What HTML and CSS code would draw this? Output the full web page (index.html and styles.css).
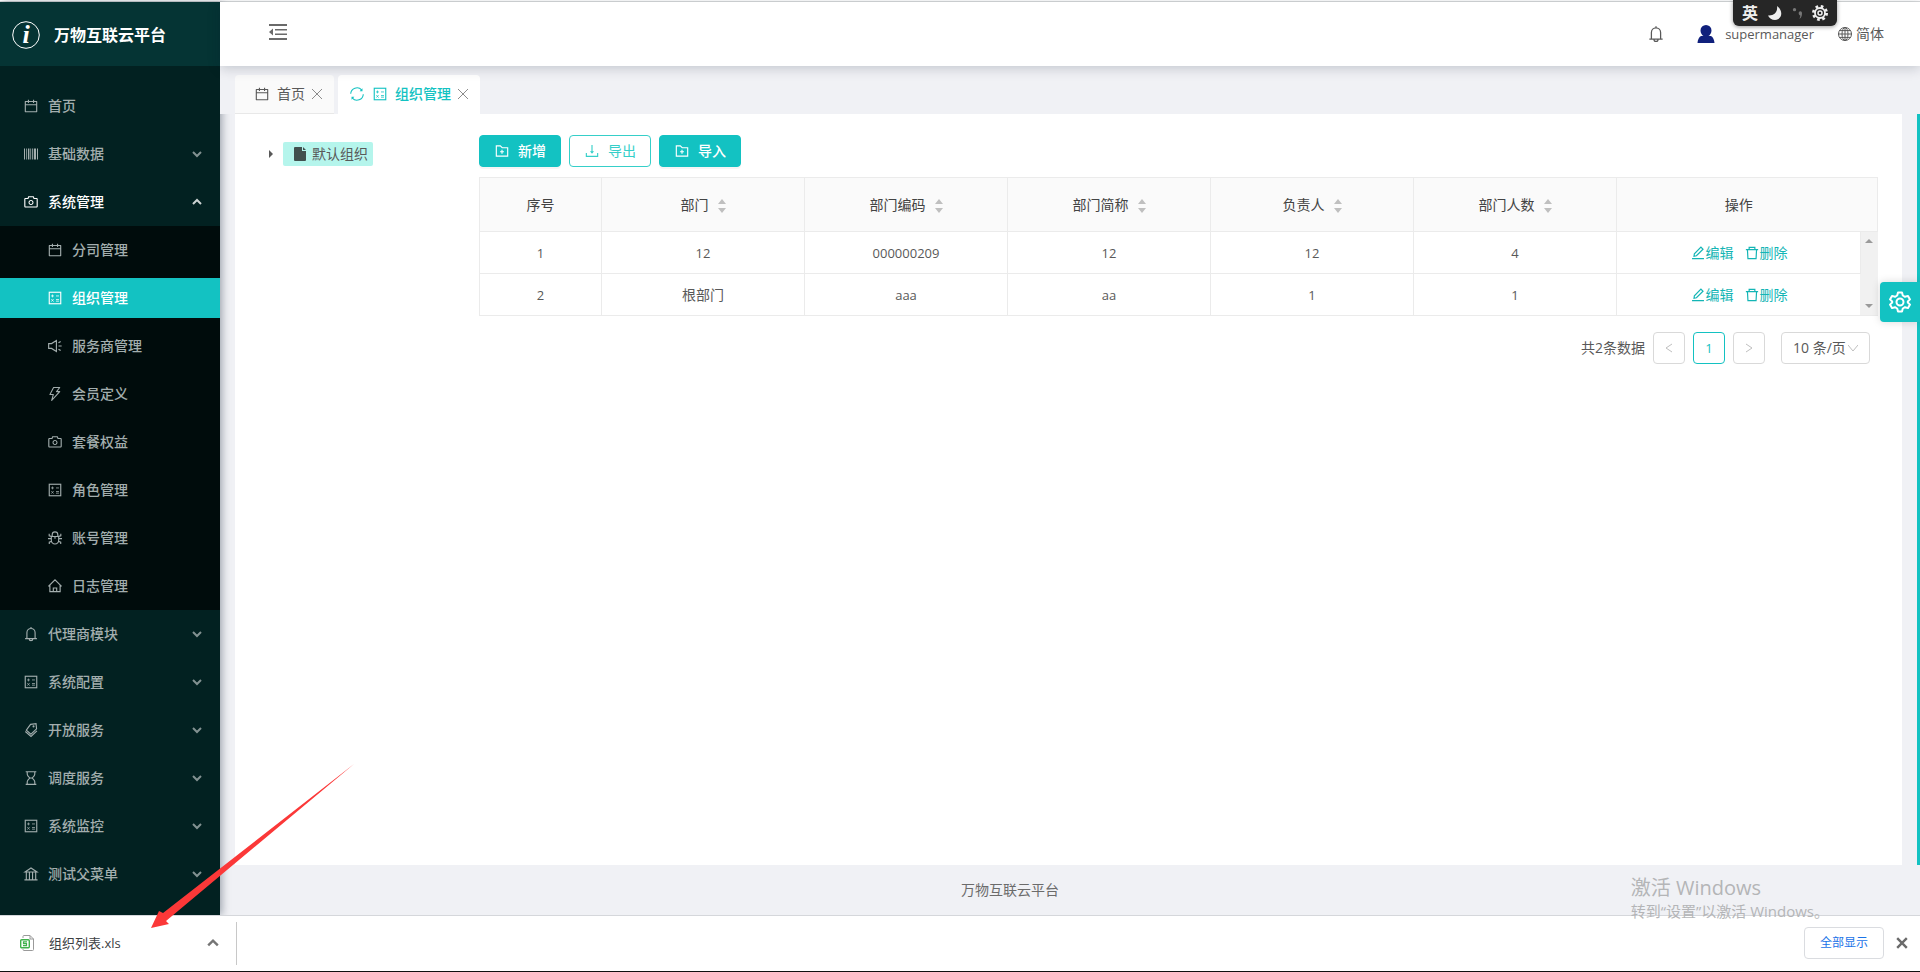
FILE: index.html
```html
<!DOCTYPE html>
<html lang="zh-CN">
<head>
<meta charset="utf-8">
<title>万物互联云平台</title>
<link rel="stylesheet" href="styles.css">
</head>
<body>
<svg class="sprite" aria-hidden="true">
  <symbol id="calendar" viewBox="0 0 1024 1024"><path d="M880 184H712v-64c0-4.400-3.600-8-8-8h-56c-4.400 0-8 3.600-8 8v64H384v-64c0-4.400-3.600-8-8-8h-56c-4.400 0-8 3.600-8 8v64H144c-17.700 0-32 14.300-32 32v664c0 17.700 14.300 32 32 32h736c17.700 0 32-14.300 32-32V216c0-17.700-14.300-32-32-32zm-40 656H184V460h656v380zM184 392V256h128v48c0 4.400 3.600 8 8 8h56c4.400 0 8-3.600 8-8v-48h256v48c0 4.400 3.600 8 8 8h56c4.400 0 8-3.600 8-8v-48h128v136H184z"/></symbol>
  <symbol id="camera" viewBox="0 0 1024 1024"><path d="M864 248H728l-32.400-90.800a32.070 32.070 0 0 0-30.200-21.200H358.600c-13.500 0-25.600 8.500-30.100 21.200L296 248H160c-44.200 0-80 35.800-80 80v456c0 44.200 35.800 80 80 80h704c44.200 0 80-35.800 80-80V328c0-44.200-35.800-80-80-80zm8 536c0 4.400-3.600 8-8 8H160c-4.400 0-8-3.600-8-8V328c0-4.400 3.600-8 8-8h186.700l17.100-47.800 22.900-64.200h250.500l22.900 64.200 17.100 47.800H864c4.400 0 8 3.600 8 8v456zM512 384c-88.400 0-160 71.600-160 160s71.600 160 160 160 160-71.600 160-160-71.600-160-160-160zm0 256c-53 0-96-43-96-96s43-96 96-96 96 43 96 96-43 96-96 96z"/></symbol>
  <symbol id="barcode" viewBox="0 0 1024 1024"><path d="M64 160h64v704H64zM208 160h52v704h-52zM320 160h88v704h-88zM468 160h52v704h-52zM580 160h52v704h-52zM692 160h140v704H692zM896 160h64v704h-64z"/></symbol>
  <symbol id="calculator" viewBox="0 0 1024 1024"><g fill="none" stroke="currentColor" stroke-width="72"><rect x="144" y="144" width="736" height="736"/><g stroke-width="50"><path d="M260 380h180M350 290v180M576 380h190M576 610h190M576 714h190M280 584l140 156M420 584L280 740"/></g></g></symbol>
  <symbol id="sound" viewBox="0 0 1024 1024"><g fill="none" stroke="currentColor" stroke-width="72"><path d="M106 358h184l312-198v704L290 666H106zM736 512h202M734 310l140-86M734 714l140 86"/></g></symbol>
  <symbol id="bolt" viewBox="0 0 1024 1024"><path fill="none" stroke="currentColor" stroke-width="68" stroke-linejoin="round" d="M420 98h396L610 360h204L300 918l106-378H188z"/></symbol>
  <symbol id="bug" viewBox="0 0 1024 1024"><g fill="none" stroke="currentColor" stroke-width="72"><path d="M276 412h472v248a236 236 0 0 1-472 0zM332 404V300a180 180 0 0 1 360 0v104M512 430v130M64 550h206M754 550h206M276 410l-136-40V240M748 410l136-40V240M294 720l-148 60v112M730 720l148 60v112"/></g></symbol>
  <symbol id="home" viewBox="0 0 1024 1024"><path fill="none" stroke="currentColor" stroke-width="74" d="M90 536l422-420 422 420M184 450v420h656V450M404 870V640h216v230"/></symbol>
  <symbol id="bell" viewBox="0 0 1024 1024"><path fill="none" stroke="currentColor" stroke-width="72" d="M250 770V424a262 262 0 0 1 524 0v346M134 806h756M512 64v96M396 824c0 146 232 146 232 0"/></symbol>
  <symbol id="tags" viewBox="0 0 1024 1024"><g fill="none" stroke="currentColor" stroke-width="72"><path d="M484 150l350-44 34 328-360 346-296-260z"/><path d="M150 610l362 310 380-350"/><circle cx="674" cy="280" r="30"/></g></symbol>
  <symbol id="hourglass" viewBox="0 0 1024 1024"><path fill="none" stroke="currentColor" stroke-width="72" d="M172 108h680M172 916h680M270 116v150c0 110 110 190 170 246-60 56-170 136-170 246v150M754 116v150c0 110-110 190-170 246 60 56 170 136 170 246v150M420 512h184"/></symbol>
  <symbol id="bank" viewBox="0 0 1024 1024"><path fill="none" stroke="currentColor" stroke-width="72" d="M130 380L512 130l382 250zM212 400v450M412 400v450M612 400v450M812 400v450M92 886h840"/></symbol>
  <symbol id="down" viewBox="0 0 10 10"><path fill="none" stroke="currentColor" stroke-width="2" d="M1 3l4 4 4-4"/></symbol>
  <symbol id="up" viewBox="0 0 10 10"><path fill="none" stroke="currentColor" stroke-width="2" d="M1 7l4-4 4 4"/></symbol>
  <symbol id="close" viewBox="0 0 10 10"><path fill="none" stroke="currentColor" d="M0 0l10 10M10 0L0 10"/></symbol>
  <symbol id="cross" viewBox="0 0 10 10"><path fill="none" stroke="currentColor" stroke-width="2" d="M1 1l8 8M9 1l-8 8"/></symbol>
  <symbol id="reload" viewBox="0 0 1024 1024"><path fill="none" stroke="currentColor" stroke-width="70" d="M110 500a402 402 0 0 1 700-250M914 524a402 402 0 0 1-700 250"/><path d="M862 140v190H680zM162 884V694h182z"/></symbol>
  <symbol id="folder" viewBox="0 0 1024 1024"><path fill="none" stroke="currentColor" stroke-width="72" d="M148 184h256l120 120h352v536H148zM512 434v250M388 560h248"/></symbol>
  <symbol id="download" viewBox="0 0 1024 1024"><path fill="none" stroke="currentColor" stroke-width="72" d="M512 130v470M150 640v216h724V640"/><path d="M380 520h264L512 690z"/></symbol>
  <symbol id="edit" viewBox="0 0 1024 1024"><path fill="none" stroke="currentColor" stroke-width="76" d="M130 872h764M256 724l24-166 420-420 132 132-420 420z"/></symbol>
  <symbol id="trash" viewBox="0 0 1024 1024"><path fill="none" stroke="currentColor" stroke-width="76" d="M120 292h784M330 292V148h364v144M220 292l32 584h520l32-584"/></symbol>
  <symbol id="sorter" viewBox="0 0 8 14"><path d="M4 0l4 5H0zM4 14l4-5H0z"/></symbol>
  <symbol id="gear" viewBox="0 0 24 24"><g fill="none" stroke="currentColor" stroke-width="2" stroke-linejoin="round"><path d="M10 2.500h4l.8 3 2.200 1.300 3-.9 2 3.500-2.200 2.100v1l2.200 2.100-2 3.500-3-.9-2.200 1.300-.8 3h-4l-.8-3L7 17.200l-3 .9-2-3.500 2.200-2.100v-1L2 9.400l2-3.500 3 .9 2.200-1.300z"/><circle cx="12" cy="12" r="3.500"/></g></symbol>
  <symbol id="globe" viewBox="0 0 14 14"><g fill="none" stroke="currentColor"><circle cx="7" cy="7" r="6.500"/><ellipse cx="7" cy="7" rx="3" ry="6.500"/><path d="M7 0v14M0 7h14M1.500 3.600h11M1.500 10.400h11"/></g></symbol>
</svg>

<div class="app">
  <aside class="sider">
    <div class="brand">
      <svg class="brand-mark" viewBox="0 0 28 28" aria-hidden="true"><circle cx="14" cy="14" r="13.300"/><text x="14" y="22">i</text></svg>
      <h1 class="brand-name">万物互联云平台</h1>
    </div>
    <nav class="menu">
      <a class="item" href="#"><svg class="icon"><use href="#calendar"/></svg>首页</a>
      <button class="item" type="button"><svg class="icon"><use href="#barcode"/></svg>基础数据<svg class="arrow"><use href="#down"/></svg></button>
      <button class="item open" type="button"><svg class="icon"><use href="#camera"/></svg>系统管理<svg class="arrow"><use href="#up"/></svg></button>
      <div class="submenu">
        <a class="item" href="#"><svg class="icon"><use href="#calendar"/></svg>分司管理</a>
        <a class="item active" href="#"><svg class="icon"><use href="#calculator"/></svg>组织管理</a>
        <a class="item" href="#"><svg class="icon"><use href="#sound"/></svg>服务商管理</a>
        <a class="item" href="#"><svg class="icon"><use href="#bolt"/></svg>会员定义</a>
        <a class="item" href="#"><svg class="icon"><use href="#camera"/></svg>套餐权益</a>
        <a class="item" href="#"><svg class="icon"><use href="#calculator"/></svg>角色管理</a>
        <a class="item" href="#"><svg class="icon"><use href="#bug"/></svg>账号管理</a>
        <a class="item" href="#"><svg class="icon"><use href="#home"/></svg>日志管理</a>
      </div>
      <button class="item" type="button"><svg class="icon"><use href="#bell"/></svg>代理商模块<svg class="arrow"><use href="#down"/></svg></button>
      <button class="item" type="button"><svg class="icon"><use href="#calculator"/></svg>系统配置<svg class="arrow"><use href="#down"/></svg></button>
      <button class="item" type="button"><svg class="icon"><use href="#tags"/></svg>开放服务<svg class="arrow"><use href="#down"/></svg></button>
      <button class="item" type="button"><svg class="icon"><use href="#hourglass"/></svg>调度服务<svg class="arrow"><use href="#down"/></svg></button>
      <button class="item" type="button"><svg class="icon"><use href="#calculator"/></svg>系统监控<svg class="arrow"><use href="#down"/></svg></button>
      <button class="item" type="button"><svg class="icon"><use href="#bank"/></svg>测试父菜单<svg class="arrow"><use href="#down"/></svg></button>
    </nav>
  </aside>

  <div class="main">
    <header class="header">
      <button class="fold" type="button" aria-label="收起菜单"><svg viewBox="0 0 18 16"><path d="M0 0h18v2H0zM6 5h12v1.500H6zM6 9.500h12V11H6zM0 14h18v2H0zM0 8l4-3.500v7z"/></svg></button>
      <div class="tools">
        <button class="bell" type="button" aria-label="通知"><svg><use href="#bell"/></svg></button>
        <a class="user" href="#"><svg viewBox="0 0 18 18" aria-hidden="true"><path d="M9 0a5.500 5.500 0 0 1 5.500 5.500c0 2.400-1.400 4.700-3 5.500h2.500c2 1 3.300 4 3.500 7H.5C.7 15 2 12 4 11h2.500c-1.600-.8-3-3.100-3-5.500A5.500 5.500 0 0 1 9 0z"/></svg>supermanager</a>
        <a class="lang" href="#"><svg class="globe"><use href="#globe"/></svg>简体</a>
      </div>
    </header>
    <div class="tabs">
      <div class="tab"><svg class="icon"><use href="#calendar"/></svg><a href="#">首页</a><button type="button" aria-label="关闭"><svg><use href="#close"/></svg></button></div>
      <div class="tab current"><svg class="icon"><use href="#reload"/></svg><svg class="icon"><use href="#calculator"/></svg><a href="#">组织管理</a><button type="button" aria-label="关闭"><svg><use href="#close"/></svg></button></div>
    </div>
    <div class="stage">
      <main class="panel">
        <section class="tree">
          <button class="caret" type="button" aria-label="展开"><svg viewBox="0 0 4 8"><path d="M0 0l4 4-4 4z"/></svg></button>
          <a class="node" href="#"><svg viewBox="0 0 12 14" aria-hidden="true"><path d="M1 0h7v4h4v9a1 1 0 0 1-1 1H1a1 1 0 0 1-1-1V1a1 1 0 0 1 1-1zM9 0l3 3H9z"/></svg>默认组织</a>
        </section>
        <section class="list">
          <div class="actions">
            <button class="btn primary" type="button"><svg class="icon"><use href="#folder"/></svg>新增</button>
            <button class="btn" type="button"><svg class="icon"><use href="#download"/></svg>导出</button>
            <button class="btn primary" type="button"><svg class="icon"><use href="#folder"/></svg>导入</button>
          </div>
          <table class="grid">
            <colgroup><col class="c-index"><col><col><col><col><col><col class="c-ops"><col class="c-scroll"></colgroup>
            <thead>
              <tr>
                <th>序号</th>
                <th>部门<svg class="sorter"><use href="#sorter"/></svg></th>
                <th>部门编码<svg class="sorter"><use href="#sorter"/></svg></th>
                <th>部门简称<svg class="sorter"><use href="#sorter"/></svg></th>
                <th>负责人<svg class="sorter"><use href="#sorter"/></svg></th>
                <th>部门人数<svg class="sorter"><use href="#sorter"/></svg></th>
                <th class="ops-head">操作</th>
                <th class="gutter-head"></th>
              </tr>
            </thead>
            <tbody>
              <tr>
                <td class="num">1</td><td class="num">12</td><td class="num">000000209</td><td class="num">12</td><td class="num">12</td><td class="num">4</td>
                <td><div class="ops"><a href="#"><svg class="icon"><use href="#edit"/></svg>编辑</a><a href="#"><svg class="icon"><use href="#trash"/></svg>删除</a></div></td>
                <td class="gutter" rowspan="2"><div class="track"><svg viewBox="0 0 8 4"><path d="M0 4l4-4 4 4z"/></svg><svg viewBox="0 0 8 4"><path d="M0 0l4 4 4-4z"/></svg></div></td>
              </tr>
              <tr>
                <td class="num">2</td><td>根部门</td><td class="num">aaa</td><td class="num">aa</td><td class="num">1</td><td class="num">1</td>
                <td><div class="ops"><a href="#"><svg class="icon"><use href="#edit"/></svg>编辑</a><a href="#"><svg class="icon"><use href="#trash"/></svg>删除</a></div></td>
              </tr>
            </tbody>
          </table>
          <div class="pager">
            <span>共2条数据</span>
            <button class="page muted" type="button" aria-label="上一页"><svg viewBox="0 0 8 10"><path d="M7 1L1 5l6 4"/></svg></button>
            <button class="page on" type="button">1</button>
            <button class="page muted" type="button" aria-label="下一页"><svg viewBox="0 0 8 10"><path d="M1 1l6 4-6 4"/></svg></button>
            <div class="size">
              <select aria-label="每页条数"><option>10 条/页</option></select>
              <svg viewBox="0 0 10 8" aria-hidden="true"><path d="M0 1l5 6 5-6"/></svg>
            </div>
          </div>
        </section>
      </main>
      <div class="edge"></div>
    </div>
    <footer class="footer">万物互联云平台</footer>
  </div>
  <button class="settings" type="button" aria-label="设置"><svg><use href="#gear"/></svg></button>
</div>

<div class="shelf">
  <div class="file">
    <svg class="file-icon" viewBox="0 0 14 16" aria-hidden="true"><path d="M3 3V1.500a1 1 0 0 1 1-1h6l3.500 3.500v10.500a1 1 0 0 1-1 1H4a1 1 0 0 1-1-1V14" fill="none" stroke="#9a9a9a"/><path d="M10 .5v3.500h3.500" fill="none" stroke="#9a9a9a"/><rect x=".7" y="4.700" width="8.600" height="8" rx="1" fill="#fff" stroke="#3fb14a" stroke-width="1.400"/><path d="M7 6.800H3.500v1.900h3v1.900H3" fill="none" stroke="#3fb14a" stroke-width="1.200"/></svg>
    <a href="#">组织列表.xls</a>
    <button class="file-menu" type="button" aria-label="更多"><svg><use href="#up"/></svg></button>
  </div>
  <button class="show-all" type="button">全部显示</button>
  <button class="dismiss" type="button" aria-label="关闭"><svg><use href="#cross"/></svg></button>
</div>

<div class="ime"><span>英</span>
  <svg viewBox="0 0 14 14" aria-hidden="true"><path d="M9 0c6 4 6 13-2 14-3 0-6-2-7-4.500C6 10 10 6 9 0z"/></svg>
  <svg class="dim" viewBox="0 0 12 14" aria-hidden="true"><circle cx="3" cy="3" r="2"/><path d="M8 7a2 2 0 1 1 4 0c0 4-1 6-3 7 0-1 1-2 1-4-1 0-2-1-2-3z"/></svg>
  <svg class="cog" viewBox="0 0 16 16" aria-hidden="true"><circle cx="8" cy="8" r="6.500" stroke-width="3" stroke-dasharray="2.550"/><circle cx="8" cy="8" r="5" stroke-width="1.800"/><circle cx="8" cy="8" r="2" stroke-width="1.500"/></svg>
</div>
<div class="notice"><p class="notice-title">激活 Windows</p><p>转到“设置”以激活 Windows。</p></div>
<svg class="pointer" viewBox="0 0 204 166" aria-hidden="true"><path d="M0 165l8-17 4 2L203 1 15 158l3 3z"/></svg>
</body>
</html>
```
FILE: styles.css
```css
* { box-sizing: border-box; }

body {
  margin: 0;
  min-height: 100vh;
  display: flex;
  flex-direction: column;
  position: relative;
  padding-top: 1px;
  border-bottom: 1px solid #111;
  background: #fff;
  color: #595959;
  font: 14px/22px "Open Sans", "Noto Sans CJK SC", sans-serif;
}

button, select { font: inherit; color: inherit; background: none; border: 0; padding: 0; }
a { color: inherit; text-decoration: none; }
p, h1 { margin: 0; }
svg { display: block; flex: none; fill: currentColor; }
.sprite { position: absolute; width: 0; height: 0; }
.icon { width: 16px; height: 16px; }

.app {
  flex: 1;
  display: flex;
  position: relative;
  border-top: 1px solid #d8dadb;
}

/* Side menu */
.sider {
  flex: none;
  width: 220px;
  background: #022121;
  box-shadow: 2px 0 8px rgba(0, 21, 41, .35);
  z-index: 1;
}
.brand {
  display: flex;
  align-items: center;
  gap: 14px;
  height: 64px;
  padding: 2px 12px 0;
  background: #053434;
  color: #fff;
}
.brand-mark { width: 28px; height: 28px; }
.brand-mark circle { fill: none; stroke: #fff; stroke-width: 1; }
.brand-mark text { font: italic bold 26px "Liberation Serif", serif; text-anchor: middle; }
.brand-name { font-size: 16px; font-weight: 700; line-height: 24px; }
.menu { padding-top: 16px; }
.item {
  display: flex;
  align-items: center;
  gap: 9px;
  width: 100%;
  height: 48px;
  padding: 0 18px 0 23px;
  border: solid transparent;
  border-width: 4px 0;
  background-clip: padding-box;
  color: #a3aeae;
  font-weight: 500;
  text-align: left;
}
.menu .item { border: solid transparent; border-width: 4px 0; }
.submenu { background: #000c0c; }
.submenu .item { padding-left: 47px; }
.item.open { color: #fff; }
.item.active { color: #fff; background-color: #13c2c2; }
.arrow { width: 10px; height: 10px; margin-left: auto; opacity: .8; }

/* Header */
.main { flex: 1; min-width: 0; display: flex; flex-direction: column; background: #f0f1f5; }
.header {
  display: flex;
  justify-content: space-between;
  align-items: center;
  height: 64px;
  padding: 0 36px 0 49px;
  background: #fff;
  box-shadow: 0 2px 12px rgba(0, 21, 41, .2);
  z-index: 2;
}
.fold svg { width: 18px; height: 16px; color: #6a6a6a; }
.fold { padding-bottom: 4px; }
.tools { display: flex; align-items: center; }
.bell { margin-right: 32px; }
.bell svg { width: 18px; height: 18px; }
.user { display: flex; align-items: center; gap: 10px; margin-right: 24px; font-size: 13px; }
.user svg { width: 18px; height: 18px; color: #10207c; }
.lang { display: flex; align-items: center; gap: 4px; }
.globe { width: 14px; height: 14px; }

/* Tabs */
.tabs { display: flex; gap: 4px; padding: 9px 15px 0; background: #f0f1f5; z-index: 1; }
.tab {
  display: flex;
  align-items: center;
  gap: 7px;
  height: 39px;
  padding: 0 12px 0 19px;
  border-bottom: 1px solid #e8e8e8;
  border-radius: 4px 4px 0 0;
  background: #fafafa;
}
.tab.current { padding-left: 11px; background: #fff; border-color: #fff; color: #13c2c2; font-weight: 500; }
.tab button { color: #8c8c8c; }
.tab button svg { width: 10px; height: 10px; }

/* Workspace */
.stage { flex: 1; display: flex; justify-content: space-between; padding-left: 15px; gap: 15px; }
.panel { flex: 1; min-width: 0; display: flex; padding: 21px 24px 0 34px; background: #fff; }
.edge { width: 3px; background: #13c2c2; }
.tree { flex: none; width: 210px; display: flex; align-items: flex-start; gap: 10px; padding-top: 7px; }
.caret { height: 24px; }
.caret svg { width: 4px; height: 8px; }
.node { display: flex; align-items: center; gap: 6px; height: 24px; padding: 0 5px 0 11px; border-radius: 2px; background: #b5f5ec; }
.node svg { width: 12px; height: 14px; color: #41504e; }
.list { flex: 1; min-width: 0; }
.actions { display: flex; gap: 8px; margin-bottom: 10px; }
.btn {
  display: flex;
  align-items: center;
  gap: 8px;
  height: 32px;
  padding: 0 14px;
  border: 1px solid #36cfc9;
  border-radius: 4px;
  color: #36cfc9;
}
.btn.primary { background: #13c2c2; border-color: #13c2c2; color: #fff; font-weight: 500; box-shadow: 0 2px 0 rgba(0, 0, 0, .04); }

.grid { width: 100%; table-layout: fixed; border-collapse: collapse; text-align: center; }
.c-index { width: 122px; }
.c-ops { width: 244px; }
.c-scroll { width: 17px; }
.grid th { height: 54px; padding: 0; border: 1px solid #ebebeb; background: #fafafa; color: #434343; font-weight: 400; }
.grid td { height: 42px; padding: 0; border: 1px solid #ebebeb; }
.grid .num { font-size: 13px; }
.grid .ops-head { border-right: 0; }
.grid .gutter-head { border-left: 0; }
.grid .gutter { background: #f1f1f1; border-color: #ebebeb #f1f1f1; }
.track { display: flex; flex-direction: column; justify-content: space-between; align-items: center; height: 83px; padding: 7px 0; color: #9a9a9a; }
.track svg { width: 8px; height: 4px; }
.sorter { display: inline-block; width: 8px; height: 14px; margin-left: 9px; vertical-align: middle; color: #bfbfbf; }
.ops { display: flex; justify-content: center; gap: 10px; color: #13b5b5; }
.ops a { display: flex; align-items: center; }

.pager { display: flex; justify-content: flex-end; align-items: center; gap: 8px; padding: 16px 8px 0; }
.page { display: flex; align-items: center; justify-content: center; width: 32px; height: 32px; border: 1px solid #d9d9d9; border-radius: 4px; }
.page.on { border-color: #13c2c2; color: #13c2c2; font-size: 13px; }
.page svg { width: 8px; height: 10px; fill: none; stroke: #bfbfbf; }
.size { position: relative; margin-left: 8px; }
.size select { appearance: none; display: block; width: 89px; height: 32px; padding: 0 11px; border: 1px solid #d9d9d9; border-radius: 4px; }
.size svg { position: absolute; right: 12px; top: 12px; width: 10px; height: 8px; fill: none; stroke: #bfbfbf; pointer-events: none; }

.footer { height: 50px; padding: 14px 120px 0 0; text-align: center; color: #6b6b6b; }

.settings {
  position: absolute;
  top: 280px;
  right: 0;
  display: flex;
  align-items: center;
  justify-content: center;
  width: 40px;
  height: 40px;
  border-radius: 4px 0 0 4px;
  background: #13c2c2;
  color: #fff;
  box-shadow: 0 0 8px rgba(0, 0, 0, .15);
  z-index: 3;
}
.settings svg { width: 24px; height: 24px; }

/* Download shelf */
.shelf { display: flex; align-items: center; height: 56px; padding: 0 12px 1px 0; border-top: 1px solid #d5d7db; background: #fff; z-index: 1; }
.file { display: flex; align-items: center; gap: 15px; width: 237px; height: 43px; padding: 0 17px 0 20px; border-right: 1px solid #c8c8c8; font-size: 13px; color: #3c4043; }
.file-icon { width: 14px; height: 16px; }
.file-menu { margin-left: auto; color: #757575; }
.file-menu svg { width: 12px; height: 12px; }
.show-all { width: 80px; height: 32px; margin-left: auto; border: 1px solid #dadce0; border-radius: 4px; color: #1a73e8; font-size: 12px; }
.dismiss { margin-left: 12px; color: #6b6b6b; }
.dismiss svg { width: 12px; height: 12px; }

/* Desktop overlays */
.ime { position: absolute; top: 0; right: 83px; display: flex; align-items: center; gap: 10px; height: 26px; padding: 0 9px; border-radius: 0 0 6px 6px; background: #262626; color: #eee; z-index: 4; box-shadow: 0 1px 4px rgba(0, 0, 0, .4); }
.ime span { font-size: 16px; font-weight: 700; }
.ime svg { width: 14px; height: 14px; }
.ime .dim { width: 10px; color: #777; }
.ime .cog { width: 16px; height: 16px; fill: none; stroke: #eee; }
.notice { position: absolute; right: 91px; bottom: 50px; color: #b4b5b7; font: 15px/20px "Open Sans", "Noto Sans CJK SC", sans-serif; z-index: 4; pointer-events: none; }
.notice-title { font-size: 20px; line-height: 26px; }
.pointer { position: absolute; left: 151px; bottom: 42px; width: 204px; height: 166px; color: #fb3838; z-index: 5; pointer-events: none; }
```
